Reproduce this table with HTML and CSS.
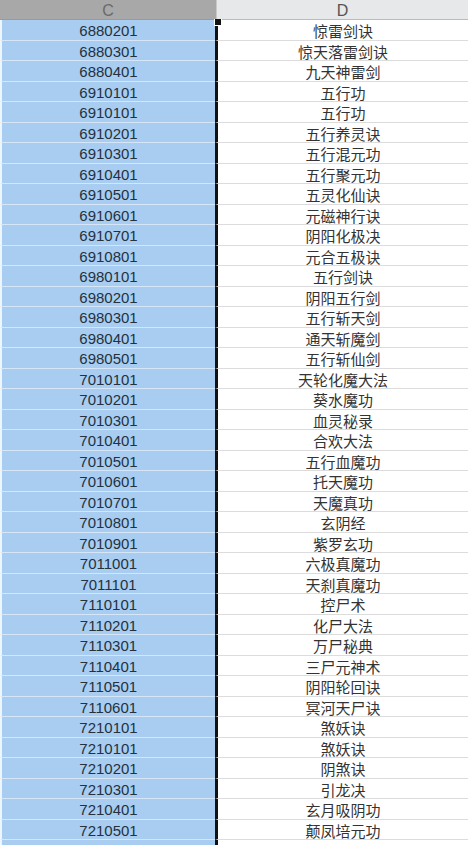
FILE: index.html
```html
<!DOCTYPE html>
<html>
<head>
<meta charset="utf-8">
<link rel="stylesheet" href="styles.css">
</head>
<body>
<div class="sheet">
  <div class="hdr">
    <div class="hc">C</div>
    <div class="hd">D</div>
  </div>
  <div class="rows">
    <div class="row"><div class="c">6880201</div><div class="d">惊雷剑诀</div></div>
    <div class="row"><div class="c">6880301</div><div class="d">惊天落雷剑诀</div></div>
    <div class="row"><div class="c">6880401</div><div class="d">九天神雷剑</div></div>
    <div class="row"><div class="c">6910101</div><div class="d">五行功</div></div>
    <div class="row"><div class="c">6910101</div><div class="d">五行功</div></div>
    <div class="row"><div class="c">6910201</div><div class="d">五行养灵诀</div></div>
    <div class="row"><div class="c">6910301</div><div class="d">五行混元功</div></div>
    <div class="row"><div class="c">6910401</div><div class="d">五行聚元功</div></div>
    <div class="row"><div class="c">6910501</div><div class="d">五灵化仙诀</div></div>
    <div class="row"><div class="c">6910601</div><div class="d">元磁神行诀</div></div>
    <div class="row"><div class="c">6910701</div><div class="d">阴阳化极决</div></div>
    <div class="row"><div class="c">6910801</div><div class="d">元合五极诀</div></div>
    <div class="row"><div class="c">6980101</div><div class="d">五行剑诀</div></div>
    <div class="row"><div class="c">6980201</div><div class="d">阴阳五行剑</div></div>
    <div class="row"><div class="c">6980301</div><div class="d">五行斩天剑</div></div>
    <div class="row"><div class="c">6980401</div><div class="d">通天斩魔剑</div></div>
    <div class="row"><div class="c">6980501</div><div class="d">五行斩仙剑</div></div>
    <div class="row"><div class="c">7010101</div><div class="d">天轮化魔大法</div></div>
    <div class="row"><div class="c">7010201</div><div class="d">葵水魔功</div></div>
    <div class="row"><div class="c">7010301</div><div class="d">血灵秘录</div></div>
    <div class="row"><div class="c">7010401</div><div class="d">合欢大法</div></div>
    <div class="row"><div class="c">7010501</div><div class="d">五行血魔功</div></div>
    <div class="row"><div class="c">7010601</div><div class="d">托天魔功</div></div>
    <div class="row"><div class="c">7010701</div><div class="d">天魔真功</div></div>
    <div class="row"><div class="c">7010801</div><div class="d">玄阴经</div></div>
    <div class="row"><div class="c">7010901</div><div class="d">紫罗玄功</div></div>
    <div class="row"><div class="c">7011001</div><div class="d">六极真魔功</div></div>
    <div class="row"><div class="c">7011101</div><div class="d">天刹真魔功</div></div>
    <div class="row"><div class="c">7110101</div><div class="d">控尸术</div></div>
    <div class="row"><div class="c">7110201</div><div class="d">化尸大法</div></div>
    <div class="row"><div class="c">7110301</div><div class="d">万尸秘典</div></div>
    <div class="row"><div class="c">7110401</div><div class="d">三尸元神术</div></div>
    <div class="row"><div class="c">7110501</div><div class="d">阴阳轮回诀</div></div>
    <div class="row"><div class="c">7110601</div><div class="d">冥河天尸诀</div></div>
    <div class="row"><div class="c">7210101</div><div class="d">煞妖诀</div></div>
    <div class="row"><div class="c">7210101</div><div class="d">煞妖诀</div></div>
    <div class="row"><div class="c">7210201</div><div class="d">阴煞诀</div></div>
    <div class="row"><div class="c">7210301</div><div class="d">引龙决</div></div>
    <div class="row"><div class="c">7210401</div><div class="d">玄月吸阴功</div></div>
    <div class="row"><div class="c">7210501</div><div class="d">颠凤培元功</div></div>
    <div class="row"><div class="c"></div><div class="d"></div></div>
  </div>
  <div class="handle"></div>
</div>
</body>
</html>
```
FILE: styles.css
```css
html, body {
  margin: 0;
  padding: 0;
  background: #ffffff;
  overflow: hidden;
}
.sheet {
  position: relative;
  width: 468px;
  height: 845px;
  overflow: hidden;
  font-family: "Liberation Sans", "Noto Sans CJK SC", sans-serif;
}
.hdr {
  display: flex;
  height: 20px;
}
.hc {
  width: 217px;
  box-sizing: border-box;
  background: #a8a8a8;
  color: #6a6a6a;
  border-bottom: 1px solid #9a9a9a;
  border-right: 1px solid #c8c8c8;
  font-size: 16px;
  line-height: 21px;
  text-align: center;
}
.hd {
  flex: 1;
  box-sizing: border-box;
  background: #e6e8ea;
  color: #555;
  border-bottom: 1px solid #b8babc;
  font-size: 16px;
  line-height: 21px;
  text-align: center;
}
.rows {
  display: grid;
  grid-auto-rows: 20.5px;
}
.row {
  display: flex;
}
.c {
  width: 215px;
  box-sizing: border-box;
  background: #a8cdf0;
  border-left: 2px solid #eef6fd;
  border-bottom: 1px solid #d4e6f8;
  color: #24313f;
  font-size: 15px;
  padding-top: 1px;
  line-height: 19px;
  text-align: center;
}
.d {
  flex: 1;
  box-sizing: border-box;
  border-left: 3px solid #111;
  border-bottom: 1px solid #dcdcdc;
  color: #333;
  font-family: "Noto Sans CJK SC", sans-serif;
  font-size: 15px;
  padding-top: 1px;
  line-height: 19px;
  text-align: center;
}
.handle {
  position: absolute;
  left: 214px;
  top: 19px;
  width: 6px;
  height: 6px;
  background: #111;
  border: 1px solid #fff;
  border-top: none;
}
```
